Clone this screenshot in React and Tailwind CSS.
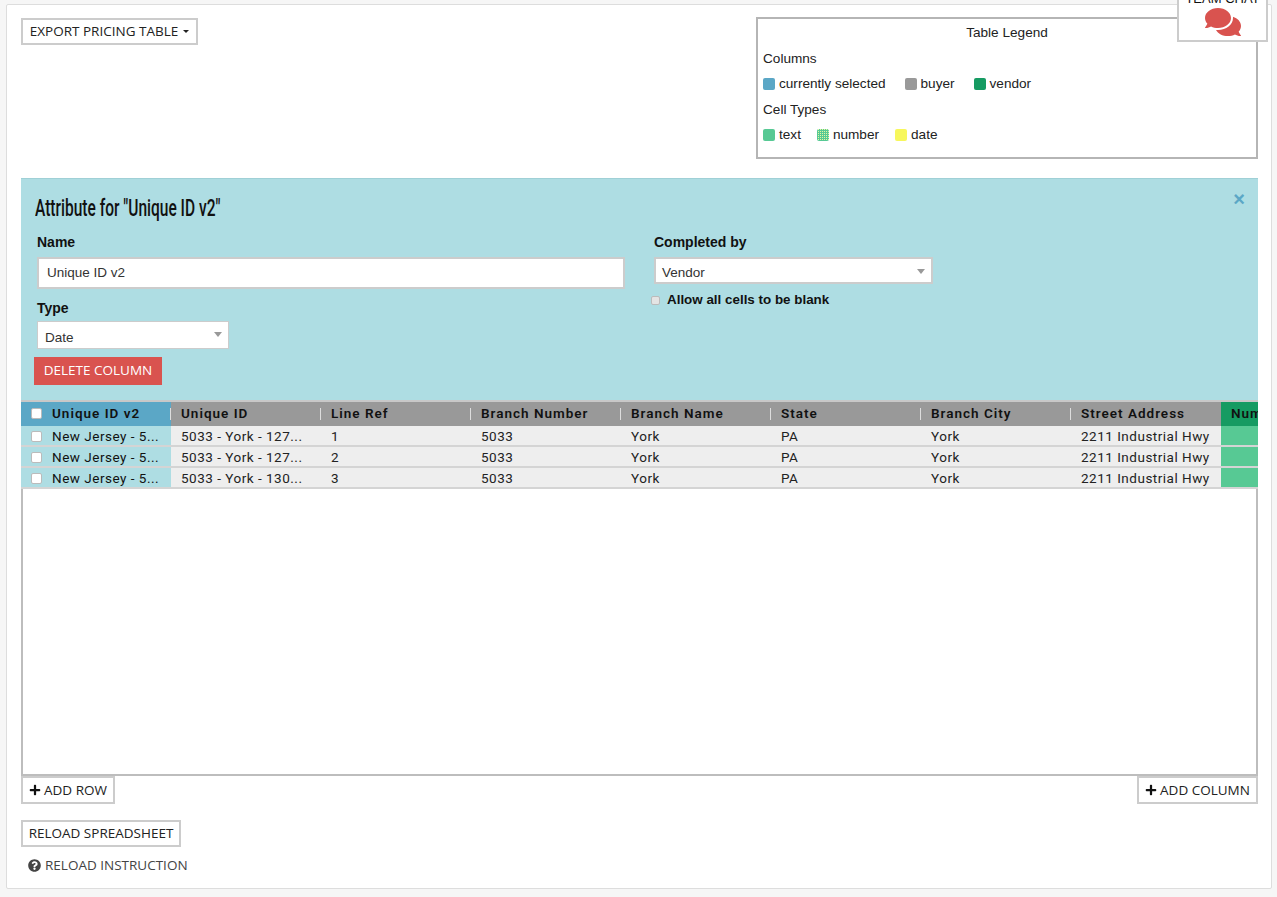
import { FaComments, FaPlus, FaQuestionCircle } from 'react-icons/fa';

const columns = ['Unique ID', 'Line Ref', 'Branch Number', 'Branch Name', 'State', 'Branch City', 'Street Address'];

const rows = [
    ['5033 - York - 127...', '1', '5033', 'York', 'PA', 'York', '2211 Industrial Hwy'],
    ['5033 - York - 127...', '2', '5033', 'York', 'PA', 'York', '2211 Industrial Hwy'],
    ['5033 - York - 130...', '3', '5033', 'York', 'PA', 'York', '2211 Industrial Hwy'],
];

const openSans = "font-['Open_Sans',sans-serif]";

const Swatch = ({ className, children }) => (
    <span className="flex items-center">
        <span className={`w-[12px] h-[12px] rounded-[2px] mr-[4px] ${className}`} />
        {children}
    </span>
);

const Caret = () => (
    <span className="absolute right-[6px] top-[10px] w-0 h-0 border-x-[4px] border-x-transparent border-t-[5px] border-t-[#999]" />
);

const FakeCheckbox = ({ className = '' }) => (
    <span className={`block w-[11px] h-[11px] bg-white rounded-[2px] border border-[#bbb] ${className}`} />
);

const App = () => {
    return (
        <div className="h-[897px] overflow-hidden bg-[#f6f6f6] pl-[6px] pr-[5px] pt-[4px] font-['Liberation_Sans',sans-serif] text-[#111]">
            <div className="relative h-[885px] bg-white border border-[#ddd] rounded-[2px] pl-[14px] pr-[13px] pt-[12px]">
                {/* Team chat tab */}
                <div className="absolute right-[3px] -top-[16px] w-[91px] h-[53px] bg-white border-2 border-[#ccc] border-t-0 flex flex-col items-center">
                    <span className="text-[13px] leading-[14px] mt-[3px] whitespace-nowrap">TEAM CHAT</span>
                    <FaComments className="text-[#d9534f] text-[36px] -mt-[2px]" />
                </div>

                {/* Top row */}
                <div className="flex justify-between items-start h-[161px]">
                    <button className={`${openSans} h-[27px] w-[177px] border-2 border-[#ccc] bg-white text-[13.5px] text-[#222] flex items-center justify-center mt-[1px]`}>
                        EXPORT PRICING TABLE
                        <span className="ml-[5px] w-0 h-0 border-x-[3px] border-x-transparent border-t-[3px] border-t-[#222]" />
                    </button>
                    <div className="w-[502px] h-[142px] border-2 border-[#b5b5b5] px-[5px] text-[13.6px] text-[#222]">
                        <div className="text-center leading-[16px] mt-[6px]">Table Legend</div>
                        <div className="leading-[16px] mt-[10px]">Columns</div>
                        <div className="flex leading-[16px] mt-[9px] gap-[19px]">
                            <Swatch className="bg-[#5ba7c6]">currently selected</Swatch>
                            <Swatch className="bg-[#999999]">buyer</Swatch>
                            <Swatch className="bg-[#169b62]">vendor</Swatch>
                        </div>
                        <div className="leading-[16px] mt-[10px]">Cell Types</div>
                        <div className="flex leading-[16px] mt-[9px] gap-[16px]">
                            <Swatch className="bg-[#57c994]">text</Swatch>
                            <Swatch className="bg-[#57c994] bg-[conic-gradient(#e4f7a0_25%,transparent_0)] bg-[length:2px_2px]">number</Swatch>
                            <Swatch className="bg-[#f7f75c]">date</Swatch>
                        </div>
                    </div>
                </div>

                {/* Attribute panel */}
                <div className="relative h-[222px] bg-[#aedde3] border-t border-[#9fd0d6] px-[16px]">
                    <h2 className="text-[23px] leading-[24px] pt-[18px] -ml-[2px] origin-left scale-x-[0.675] whitespace-nowrap font-['Roboto',sans-serif] font-medium">
                        Attribute for "Unique ID v2"
                    </h2>
                    <span className="absolute right-[13px] top-[10px] text-[#5ba7c6] text-[20px] leading-[20px] font-bold">×</span>
                    <div className="flex mt-[13px]">
                        <div className="w-[588px]">
                            <label className="block text-[14px] font-bold leading-[16px]">Name</label>
                            <div className="h-[32px] mt-[7px] bg-white border-2 border-[#ccc] pl-[8px] text-[13.5px] leading-[28px] text-[#333]">Unique ID v2</div>
                            <label className="block text-[14px] font-bold leading-[16px] mt-[11px]">Type</label>
                            <div className="relative w-[192px] h-[28px] mt-[5px] bg-white border border-[#ccc] pl-[7px] text-[13.5px] leading-[31px] text-[#333]">
                                Date
                                <Caret />
                            </div>
                            <button className={`${openSans} block w-[128px] h-[28px] mt-[8px] -ml-[3px] pb-[2px] bg-[#d9534f] text-white text-[13.5px] font-medium`}>DELETE COLUMN</button>
                        </div>
                        <div className="ml-[29px]">
                            <label className="block text-[14px] font-bold leading-[16px]">Completed by</label>
                            <div className="relative w-[279px] h-[27px] mt-[7px] bg-white border-2 border-[#ccc] pl-[6px] text-[13.5px] leading-[27px] text-[#333]">
                                Vendor
                                <Caret />
                            </div>
                            <div className="flex items-center mt-[8px] -ml-[3px] text-[13.4px] font-bold leading-[16px]">
                                <FakeCheckbox className="!w-[9px] !h-[9px] !bg-[#e4e4e4] mr-[7px]" />
                                Allow all cells to be blank
                            </div>
                        </div>
                    </div>
                </div>

                {/* Spreadsheet */}
                <div className="flex flex-col h-[376px] overflow-hidden font-['Roboto',sans-serif] text-[13.5px] tracking-[0.5px]">
                    <div className="flex h-[26px] shrink-0 border-t-2 border-[#c8c8c8] font-semibold tracking-[1px]">
                        <div className="w-[150px] shrink-0 flex items-center bg-[#5ba7c6] pl-[10px] pb-[1px]">
                            <FakeCheckbox className="mr-[10px]" />
                            Unique ID v2
                        </div>
                        {columns.map((col) => (
                            <div key={col} className="w-[150px] shrink-0 flex items-center bg-[#999] pl-[10px] pb-[1px] relative">
                                <span className="absolute -left-[1px] top-[6px] h-[12px] w-px bg-[#ddd]" />
                                {col}
                            </div>
                        ))}
                        <div className="w-[37px] shrink-0 flex items-center bg-[#169b62] pl-[10px] pb-[1px] overflow-hidden">Number</div>
                    </div>
                    {rows.map((row, i) => (
                        <div key={i} className="flex h-[21px] shrink-0 border-b-2 border-[#d4d4d4]">
                            <div className="w-[150px] shrink-0 flex items-center bg-[#aedde3] pl-[10px] pt-[2px]">
                                <FakeCheckbox className="mr-[10px]" />
                                New Jersey - 5...
                            </div>
                            {row.map((cell, j) => (
                                <div key={j} className="w-[150px] shrink-0 flex items-center bg-[#eeeeee] pl-[10px] pt-[2px] text-[#222]">{cell}</div>
                            ))}
                            <div className="w-[37px] shrink-0 bg-[#57c994]" />
                        </div>
                    ))}
                    <div className="flex-1 border-2 border-t-0 border-[#bdbdbd]" />
                </div>

                {/* Table actions */}
                <div className={`${openSans} flex justify-between text-[13.5px] text-[#222]`}>
                    <button className="h-[28px] w-[94px] border-2 border-[#ccc] bg-white flex items-center justify-center">
                        <FaPlus className="text-[12px] mr-[3px] text-[#111]" />
                        ADD ROW
                    </button>
                    <button className="h-[28px] w-[121px] border-2 border-[#ccc] bg-white flex items-center justify-center">
                        <FaPlus className="text-[12px] mr-[3px] text-[#111]" />
                        ADD COLUMN
                    </button>
                </div>
                <div className={openSans}>
                    <button className="h-[27px] w-[160px] mt-[16px] border-2 border-[#ccc] bg-white text-[13.5px] text-[#222]">RELOAD SPREADSHEET</button>
                    <div className="flex items-center mt-[8px] ml-[7px] text-[13.5px] text-[#444]">
                        <FaQuestionCircle className="text-[13px] mr-[4px]" />
                        RELOAD INSTRUCTION
                    </div>
                </div>
            </div>
        </div>
    );
};

export default App;
